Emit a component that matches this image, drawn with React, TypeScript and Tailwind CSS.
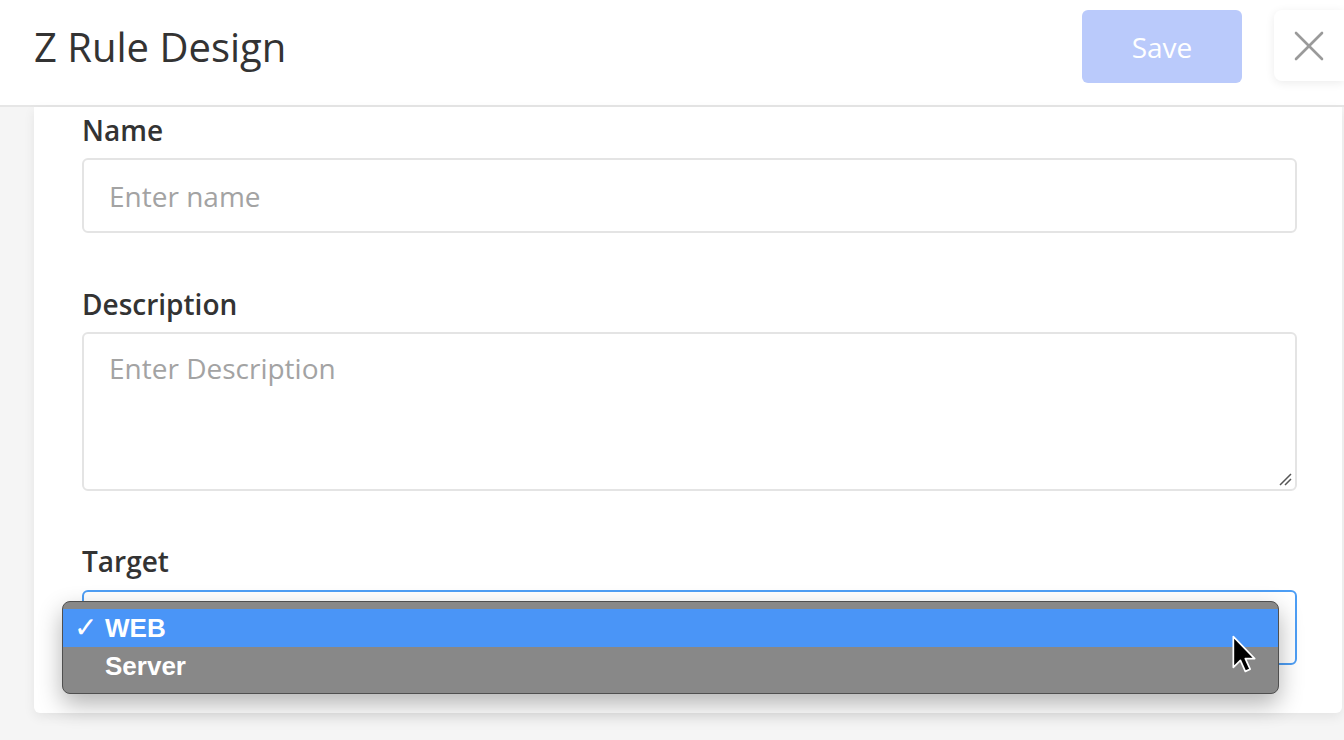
import { X } from 'lucide-react';

const openSans = { fontFamily: '"Open Sans", "Noto Sans", sans-serif' };

function Label({ children }: { children: string }) {
  return <div className="text-[28px] leading-[42px] font-semibold text-[#333333]">{children}</div>;
}

export default function App() {
  return (
    <div className="w-[1344px] h-[740px] overflow-hidden bg-[#f5f5f5] flex flex-col" style={openSans}>
      {/* Header */}
      <header className="h-[107px] shrink-0 bg-white border-b-2 border-[#e6e6e6] flex items-start pt-[10px] pl-[34px]">
        <h1 className="flex-1 text-[40px] leading-[73px] text-[#333333]">Z Rule Design</h1>
        <button className="w-[160px] h-[73px] rounded-md bg-[#bacafb] text-white text-[28px]">Save</button>
        <button className="ml-[32px] w-[70px] h-[71px] rounded-l-lg bg-white shadow-[0_2px_10px_rgba(0,0,0,0.08)] flex items-center justify-center">
          <X className="w-[52px] h-[52px] text-[#9a9a9a]" strokeWidth={1.2} />
        </button>
      </header>

      {/* Form card */}
      <div className="pl-[34px] pr-[2px]">
        <div className="bg-white rounded-b-md shadow-[0_4px_12px_rgba(0,0,0,0.07)] pl-[48px] pr-[45px] pt-[2px] pb-[48px]">
          <Label>Name</Label>
          <div className="mt-[7px] h-[75px] rounded-md border-2 border-[#e4e4e4] flex items-center pl-[25px] text-[28px] text-[#a3a3a3]">
            Enter name
          </div>

          <div className="mt-[50px]">
            <Label>Description</Label>
          </div>
          <div className="relative mt-[7px] h-[159px] rounded-md border-2 border-[#e4e4e4] pl-[25px] pt-[13px] text-[28px] leading-[42px] text-[#a3a3a3]">
            Enter Description
            <svg className="absolute right-[3px] bottom-[3px]" width="14" height="14" viewBox="0 0 14 14">
              <path d="M2 13 L13 2 M7 13 L13 7" stroke="#555" strokeWidth="1.5" />
            </svg>
          </div>

          <div className="mt-[49px]">
            <Label>Target</Label>
          </div>
          <div className="relative mt-[8px] h-[75px] rounded-md border-2 border-[#4d9ef5]">
            {/* native select menu */}
            <div
              className="absolute left-[-22px] top-[9px] w-[1217px] rounded-lg border border-[#4f4f4f] bg-[#888888] py-[7px] shadow-[0_10px_24px_rgba(0,0,0,0.3)] text-white text-[26px] font-semibold z-10"
              style={{ fontFamily: '"Liberation Sans", Arial, sans-serif' }}
            >
              <div className="h-[38px] bg-[#4a95f7] flex items-center">
                <span className="w-[42px] pl-[11px] text-[28px] font-normal">✓</span>
                <span>WEB</span>
              </div>
              <div className="h-[39px] flex items-center pl-[42px]">Server</div>
            </div>
            {/* mouse pointer */}
            <svg className="absolute left-[1148px] top-[43px] z-20" width="24" height="38" viewBox="-1 -1 18 28">
              <path
                d="M0 0 L0 23 L5.3 17.8 L9 26 L12.6 24.4 L9 16.4 L16 16.4 Z"
                fill="#000"
                stroke="#fff"
                strokeWidth="1.3"
                strokeLinejoin="round"
              />
            </svg>
          </div>
        </div>
      </div>
    </div>
  );
}
